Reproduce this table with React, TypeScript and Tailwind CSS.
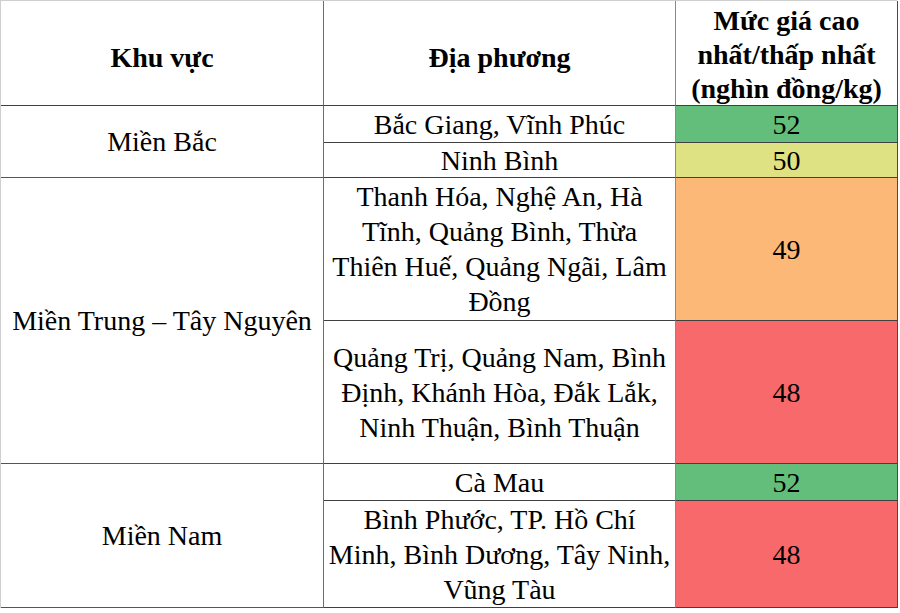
const regions = [
  { name: 'Miền Bắc', rows: 'row-start-2 row-span-2' },
  { name: 'Miền Trung – Tây Nguyên', rows: 'row-start-4 row-span-2' },
  { name: 'Miền Nam', rows: 'row-start-6 row-span-2' },
];

const places = [
  { lines: ['Bắc Giang, Vĩnh Phúc'], price: '52', color: 'bg-[#63be7b]', row: 'row-start-2' },
  { lines: ['Ninh Bình'], price: '50', color: 'bg-[#dfe283]', row: 'row-start-3' },
  {
    lines: ['Thanh Hóa, Nghệ An, Hà', 'Tĩnh, Quảng Bình, Thừa', 'Thiên Huế, Quảng Ngãi, Lâm', 'Đồng'],
    price: '49',
    color: 'bg-[#fbb877]',
    row: 'row-start-4',
  },
  {
    lines: ['Quảng Trị, Quảng Nam, Bình', 'Định, Khánh Hòa, Đắk Lắk,', 'Ninh Thuận, Bình Thuận'],
    price: '48',
    color: 'bg-[#f8696b]',
    row: 'row-start-5',
  },
  { lines: ['Cà Mau'], price: '52', color: 'bg-[#63be7b]', row: 'row-start-6' },
  {
    lines: ['Bình Phước, TP. Hồ Chí', 'Minh, Bình Dương, Tây Ninh,', 'Vũng Tàu'],
    price: '48',
    color: 'bg-[#f8696b]',
    row: 'row-start-7',
  },
];

export default function App() {
  return (
    <div className="w-[900px] h-[613px] bg-white overflow-hidden font-['Liberation_Serif',serif] text-black">
      <div className="grid w-[897px] grid-cols-[323px_352px_222px] grid-rows-[105px_37px_35px_143px_143px_37px_107px] border-t border-l border-t-[#cfcfcf] border-l-[#cfcfcf] text-[28px] leading-[35px]">
        {/* header */}
        <div className="col-start-1 row-start-1 flex items-center justify-center pt-2 font-bold border-r border-b border-r-[#6e6e6e] border-b-[#404040]">
          Khu vực
        </div>
        <div className="col-start-2 row-start-1 flex items-center justify-center pt-2 font-bold border-r border-b border-r-[#8a8a8a] border-b-[#404040]">
          Địa phương
        </div>
        <div className="col-start-3 row-start-1 flex flex-col items-center justify-center pt-1 font-bold leading-[34px] text-center border-r border-b border-r-[#4a4a4a] border-b-[#404040]">
          <span>Mức giá cao</span>
          <span>nhất/thấp nhất</span>
          <span>(nghìn đồng/kg)</span>
        </div>

        {/* regions */}
        {regions.map((r) => (
          <div
            key={r.name}
            className={`${r.rows} col-start-1 flex items-center justify-center border-r border-b border-r-[#6e6e6e] border-b-[#555555]`}
          >
            {r.name}
          </div>
        ))}

        {/* places + prices */}
        {places.map((p, i) => (
          <div key={i} className="contents">
            <div
              className={`${p.row} col-start-2 flex flex-col items-center justify-center text-center border-r border-b border-r-[#8a8a8a] border-b-[#404040]`}
            >
              {p.lines.map((line, j) => (
                <span key={j}>{line}</span>
              ))}
            </div>
            <div
              className={`${p.row} ${p.color} col-start-3 flex items-center justify-center border-r border-b border-r-[#4a4a4a] border-b-[#404040]`}
            >
              {p.price}
            </div>
          </div>
        ))}
      </div>
    </div>
  );
}
